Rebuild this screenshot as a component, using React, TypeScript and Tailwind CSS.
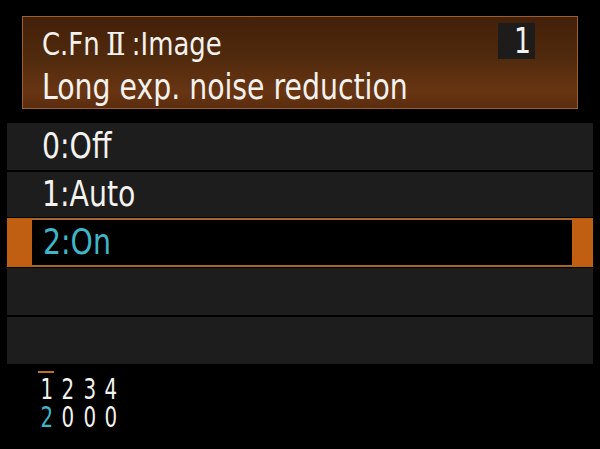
const rows = [
  { label: '0:Off', h: 'h-[47px]', mt: '' },
  { label: '1:Auto', h: 'h-[45px]', mt: 'mt-[2px]' },
];

const settings = [
  { num: '1', val: '2', active: true },
  { num: '2', val: '0', active: false },
  { num: '3', val: '0', active: false },
  { num: '4', val: '0', active: false },
];

// the camera font is taller and narrower than DejaVu, so squeeze it a bit
function Narrow({ children }: { children: React.ReactNode }) {
  return <span className="inline-block origin-left scale-x-[0.9] whitespace-nowrap">{children}</span>;
}

export default function App() {
  return (
    <div
      className="h-[449px] w-[600px] overflow-hidden bg-black text-[#f3f2ee]"
      style={{ fontFamily: '"DejaVu Sans Condensed", "DejaVu Sans", sans-serif' }}
    >
      {/* title panel */}
      <div className="ml-[22px] pt-[16px]">
        <div className="h-[93px] w-[556px] border border-[#9a5f34] bg-[linear-gradient(180deg,#43200a_0%,#502a0d_45%,#683513_82%,#5b2c0e_100%)] pl-[19px] pt-[6px]">
          <div className="flex items-start justify-between pr-[42px]">
            <div className="mt-[3px] text-[32px] leading-[36px]">
              <Narrow>
                C.Fn
                <span className="mx-[7px] font-['DejaVu_Serif',serif]">Ⅱ</span>
                :Image
              </Narrow>
            </div>
            <div className="h-[36px] w-[37px] bg-[#1d1c1b] pr-[4px] text-right text-[35px] leading-[36px]">
              <span className="inline-block origin-right scale-x-[0.85]">1</span>
            </div>
          </div>
          <div className="mt-[7px] text-[35px] leading-[36px]">
            <Narrow>Long exp. noise reduction</Narrow>
          </div>
        </div>
      </div>

      {/* options */}
      <div className="ml-[7px] mt-[14px] flex w-[586px] flex-col">
        {rows.map((r) => (
          <div
            key={r.label}
            className={`${r.h} ${r.mt} flex items-center bg-[#1d1d1d] pl-[35px] text-[35px]`}
          >
            <Narrow>{r.label}</Narrow>
          </div>
        ))}
        <div className="mt-[1px] flex h-[49px] bg-[#a9652f]">
          <div className="w-[25px] bg-[#c05e12]" />
          <div className="my-[2px] flex flex-1 items-center bg-black pl-[11px] text-[35px] text-[#3fb6c7]">
            <Narrow>2:On</Narrow>
          </div>
          <div className="w-[21px] bg-[#c05e12]" />
        </div>
        <div className="mt-[1px] h-[47px] bg-[#1d1d1d]" />
        <div className="mt-[2px] h-[47px] bg-[#1d1d1d]" />
      </div>

      {/* setting summary */}
      <div className="ml-[38px] mt-[7px] h-[2px] w-[16px] bg-[#c0702a]" />
      <div className="ml-[36px] mt-[2px] flex text-[24px] leading-[28px]">
        {settings.map((s) => (
          <div key={s.num} className="flex w-[21.5px] flex-col items-center">
            <span className="inline-block scale-x-[0.92] scale-y-[1.2]">{s.num}</span>
            <span className={`inline-block scale-x-[0.92] scale-y-[1.2] ${s.active ? 'text-[#3fb6c7]' : ''}`}>
              {s.val}
            </span>
          </div>
        ))}
      </div>
    </div>
  );
}
